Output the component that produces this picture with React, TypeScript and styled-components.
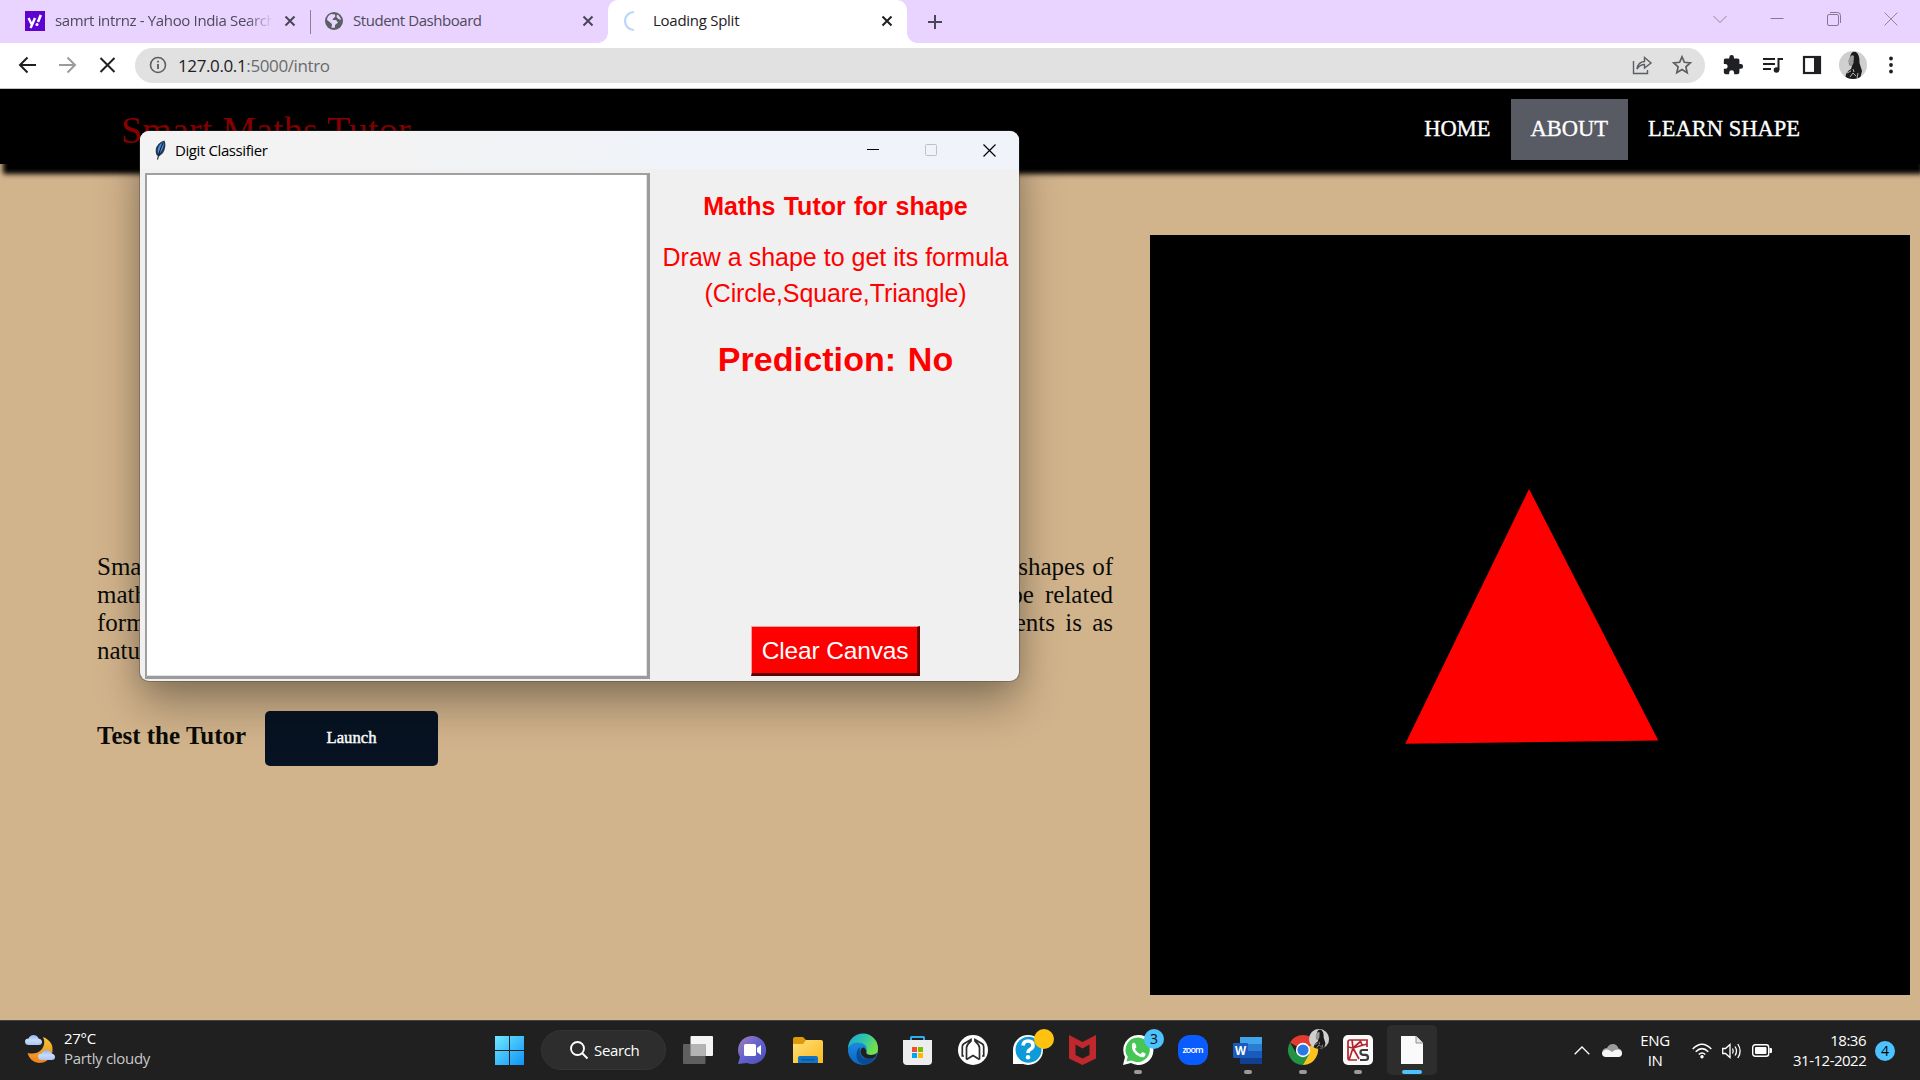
import React from "react";
import styled, { createGlobalStyle } from "styled-components";

const ui = `"Open Sans", "Noto Sans", sans-serif`;
const serif = `"Liberation Serif", "Times New Roman", serif`;
const arial = `"Liberation Sans", Arial, sans-serif`;

const Global = createGlobalStyle`
  * { box-sizing: border-box; }
  body { margin: 0; overflow: hidden; background: #d2b48c; }
  svg { display: block; flex: none; overflow: visible; }
  p, h1, h2 { margin: 0; }
  button { border: 0; padding: 0; background: none; }
`;

const Desktop = styled.div`
  position: relative;
  display: flex;
  flex-direction: column;
  width: 1920px;
  height: 1080px;
  overflow: hidden;
`;

/* ---------- Browser chrome ---------- */
const TabStrip = styled.div`
  display: flex;
  height: 43px;
  background: #e8d4ff;
`;
const Tab = styled.div<{ $w: number; $pad: number; $active?: boolean }>`
  position: relative;
  display: flex;
  align-items: center;
  width: ${(p) => p.$w}px;
  height: 43px;
  padding: 0 15px 1px ${(p) => p.$pad}px;
  color: ${(p) => (p.$active ? "#1f2024" : "#4f4a5b")};
  background: ${(p) => (p.$active ? "#fff" : "transparent")};
  border-radius: 10px 10px 0 0;
  ${(p) =>
    p.$active &&
    `&::before, &::after { content: ""; position: absolute; bottom: 0; width: 10px; height: 10px; }
     &::before { left: -10px; background: radial-gradient(circle at 0 0, transparent 9.5px, #fff 10px); }
     &::after { right: -10px; background: radial-gradient(circle at 100% 0, transparent 9.5px, #fff 10px); }`}
`;
const TabTitle = styled.span<{ $fade?: boolean; $ls?: number }>`
  flex: 1;
  margin-left: 10px;
  padding-bottom: 2px;
  overflow: hidden;
  white-space: nowrap;
  font: 15px/22px ${ui};
  letter-spacing: ${(p) => p.$ls ?? -0.35}px;
  ${(p) => p.$fade && "margin-right: 12px; mask-image: linear-gradient(90deg, #000 88%, transparent);"}
`;
const TabDivider = styled.i`
  width: 1px;
  height: 24px;
  margin-top: 10px;
  background: #8c8299;
`;
const NewTab = styled.div`
  display: flex;
  align-items: center;
  margin-left: 20px;
  flex: 1;
`;
const Controls = styled.div`
  display: flex;
  align-items: center;
  gap: 43px;
  height: 38px;
  padding-right: 22px;
`;
const Toolbar = styled.div`
  display: flex;
  align-items: center;
  height: 46px;
  padding: 0 20px 1px 18px;
  background: #fff;
  border-bottom: 1px solid #c4c4c4;
`;
const NavButtons = styled.div`
  display: flex;
  align-items: center;
  gap: 21px;
  width: 117px;
`;
const Omnibox = styled.div`
  display: flex;
  align-items: center;
  width: 1570px;
  height: 35px;
  padding: 0 13px 0 14px;
  border-radius: 18px;
  background: #e1e1e1;
`;
const Address = styled.span`
  flex: 1;
  margin-left: 11px;
  padding-top: 1px;
  color: #696b6e;
  font: 17px/24px ${ui};
  letter-spacing: -0.38px;
  b { font-weight: 400; color: #1f2024; }
`;
const OmniIcons = styled.div`
  display: flex;
  align-items: center;
  gap: 20px;
`;
const ToolIcons = styled.div`
  display: flex;
  align-items: center;
  flex: 1;
  padding-left: 17px;
  gap: 19px;
`;

/* ---------- Web page ---------- */
const Page = styled.main`
  display: flex;
  flex-direction: column;
  height: 931px;
  background: #d2b48c;
  overflow: hidden;
`;
const SiteHeader = styled.header`
  display: flex;
  justify-content: space-between;
  height: 75px;
  padding: 10px 100px 0 121px;
  background: #000;
  box-shadow: 3px 10px 5px #000;
`;
const Brand = styled.h1`
  padding-top: 9px;
  color: #8b0000;
  font: 38px/44px ${serif};
  letter-spacing: 0.15px;
`;
const SiteNav = styled.nav`
  display: flex;
`;
const NavItem = styled.a<{ $active?: boolean }>`
  height: 61px;
  padding: 0 20px;
  color: #fff;
  background: ${(p) => (p.$active ? "#585a64" : "transparent")};
  font: 22.5px/59px ${serif};
  -webkit-text-stroke: 0.35px #fff;
`;
const Split = styled.div`
  display: flex;
  flex: 1;
  justify-content: space-between;
  padding: 71px 10px 25px 97px;
`;
const Intro = styled.section`
  width: 1016px;
  padding-top: 318px;
`;
const IntroLine = styled.p<{ $space: number }>`
  display: flex;
  justify-content: space-between;
  color: #0b0b08;
  font: 25px/28px ${serif};
  word-spacing: ${(p) => p.$space}px;
`;
const LaunchRow = styled.div`
  display: flex;
  align-items: center;
  gap: 18px;
  margin-top: 46px;
`;
const LaunchLabel = styled.h2`
  width: 150px;
  padding-bottom: 6px;
  white-space: nowrap;
  color: #0b0b08;
  font: bold 25px/28px ${serif};
`;
const LaunchButton = styled.button`
  width: 173px;
  height: 55px;
  padding-bottom: 2px;
  border-radius: 5px;
  color: #fff;
  background: #071322;
  font: 16.67px/19px ${serif};
  -webkit-text-stroke: 0.45px #fff;
`;
const ShapePane = styled.section`
  width: 760px;
  height: 760px;
  background: #000;
`;

/* ---------- Floating app window ---------- */
const Window = styled.div`
  position: absolute;
  left: 140px;
  top: 131px;
  display: flex;
  flex-direction: column;
  width: 879px;
  height: 550px;
  border-radius: 9px;
  background: #f0f0f0;
  box-shadow: 0 0 0 1px rgba(60, 60, 60, 0.35), 0 24px 46px rgba(0, 0, 0, 0.32), 0 3px 24px rgba(0, 0, 0, 0.12);
  overflow: hidden;
`;
const TitleBar = styled.div`
  display: flex;
  align-items: center;
  height: 38px;
  padding: 0 23px 0 14px;
  background: linear-gradient(90deg, #f3f3f3 25%, #f0f3f9 60%);
`;
const WindowTitle = styled.span`
  flex: 1;
  margin-left: 8px;
  padding-bottom: 1px;
  color: #000;
  font: 15px/20px ${ui};
  letter-spacing: -0.4px;
`;
const WindowControls = styled.div`
  display: flex;
  align-items: center;
  gap: 46px;
`;
const WindowBody = styled.div`
  display: flex;
  flex: 1;
  padding: 4px 0 2px 5px;
`;
const DrawCanvas = styled.div`
  width: 505px;
  height: 506px;
  border: solid;
  border-width: 2px 3px 3px 2px;
  border-color: #a0a0a0 #9b9b9b #9b9b9b #a0a0a0;
  background: #fff;
  box-shadow: inset -1px -1px 0 #e3e3e3;
`;
const Panel = styled.div`
  display: flex;
  flex: 1;
  flex-direction: column;
  align-items: center;
  padding-left: 2px;
  color: #f00;
`;
const PanelText = styled.p<{ $top: number; $size?: number; $bold?: boolean; $ls?: number; $ws?: number }>`
  margin-top: ${(p) => p.$top}px;
  white-space: nowrap;
  font: ${(p) => (p.$bold ? "bold" : "normal")} ${(p) => p.$size ?? 25}px/36px ${arial};
  letter-spacing: ${(p) => p.$ls ?? 0}px;
  word-spacing: ${(p) => p.$ws ?? 0}px;
`;
const ClearButton = styled.button`
  width: 169px;
  height: 50px;
  padding: 2px 0 0 1px;
  margin-top: auto;
  margin-bottom: 3px;
  border: solid;
  border-width: 1px 3px 3px 1px;
  border-color: #ff9c9c #5c0000 #5c0000 #ff9c9c;
  color: #fff;
  background: #f00;
  font: 24.5px/28px ${arial};
  letter-spacing: -0.15px;
  white-space: nowrap;
`;

/* ---------- Taskbar ---------- */
const Taskbar = styled.footer`
  display: flex;
  height: 60px;
  background: #202020;
  border-top: 1px solid #444;
  color: #fff;
  font: 15px/20px ${ui};
`;
const Weather = styled.div`
  display: flex;
  align-items: center;
  width: 482px;
  padding: 0 0 3px 25px;
  gap: 8px;
`;
const Stack = styled.div<{ $align?: string; $w?: number; $ls?: number }>`
  display: flex;
  flex-direction: column;
  width: ${(p) => (p.$w ? `${p.$w}px` : "auto")};
  text-align: ${(p) => p.$align ?? "left"};
  letter-spacing: ${(p) => p.$ls ?? 0}px;
  white-space: nowrap;
  padding-bottom: 2px;
  small { font-size: 15px; color: #c9c9c9; }
`;
const TaskCell = styled.div<{ $open?: boolean; $focus?: boolean }>`
  position: relative;
  display: flex;
  align-items: center;
  justify-content: center;
  width: ${(p) => (p.$focus ? 50 : 55)}px;
  margin: ${(p) => (p.$focus ? "4px 3px 5px 2px" : "0 0 1px")};
  border-radius: 5px;
  background: ${(p) => (p.$focus ? "#2d2d2d" : "transparent")};
  ${(p) =>
    (p.$open || p.$focus) &&
    `&::after { content: ""; position: absolute; bottom: ${p.$focus ? 1 : 5}px; height: 4px; border-radius: 2px;
      width: ${p.$focus ? 20 : 8}px; background: ${p.$focus ? "#4cc2ff" : "#9a9a9a"}; }`}
`;
const SearchPill = styled.div`
  display: flex;
  align-items: center;
  width: 125px;
  height: 40px;
  margin: 9px 4px 0 4px;
  padding-left: 28px;
  gap: 6px;
  border-radius: 20px;
  border: 1px solid #343434;
  background: #2d2d2d;
  letter-spacing: -0.35px;
`;
const TaskBadge = styled.span<{ $bg: string }>`
  position: absolute;
  top: 8px;
  right: 1px;
  width: 20px;
  height: 20px;
  border-radius: 50%;
  background: ${(p) => p.$bg};
  color: #111;
  font: 14px/20px ${ui};
  text-align: center;
`;
const Tray = styled.div`
  display: flex;
  align-items: center;
  flex: 1;
  justify-content: flex-end;
  padding-right: 25px;
`;
const TraySlot = styled.div<{ $gap: number }>`
  margin-right: ${(p) => p.$gap}px;
`;
const Count = styled.span`
  width: 20px;
  height: 20px;
  border-radius: 50%;
  background: #4cc2ff;
  color: #000;
  font: 14px/20px ${ui};
  text-align: center;
`;

const Cross = ({ s = 10, c, w = 2 }: { s?: number; c: string; w?: number }) => (
  <svg width={s} height={s}>
    <path d={`M.5 .5L${s - 0.5} ${s - 0.5}M${s - 0.5} .5L.5 ${s - 0.5}`} stroke={c} strokeWidth={w} />
  </svg>
);

const Portrait = ({ size }: { size: number }) => (
  <svg width={size} height={size} viewBox="0 0 28 28">
    <defs><clipPath id={`por${size}`}><circle cx="14" cy="14" r="14" /></clipPath></defs>
    <g clipPath={`url(#por${size})`}>
      <rect width="28" height="28" fill="#cfcfcf" />
      <path d="M11 6Q12 0 17 1Q21 4 20.500 12L23 20L21 28H6Q7 20 12 18L13 15Q9 14 10 11Z" fill="#1b1b1b" />
      <path d="M10.500 7Q12 3 15 5L14.500 12L13 15H10.500L10 11.500L9 10.500Z" fill="#9a9a9a" />
      <path d="M8 22L12 20M11 26L14 22L17 25M18 27L19 22M14 18L15 21" fill="none" stroke="#b5b5b5" strokeWidth="1" />
    </g>
  </svg>
);

function BrowserChrome() {
  return (
    <>
      <TabStrip>
        <Tab $w={310} $pad={25}>
          <svg width="20" height="20">
            <rect width="20" height="20" fill="#5f01d1" />
            <path d="M3.500 7L6.500 13M10 7L5.600 17" stroke="#fff" strokeWidth="2.4" />
            <path d="M15.800 4L13 11" stroke="#fff" strokeWidth="2.6" />
            <circle cx="12" cy="13.600" r="1.500" fill="#fff" />
          </svg>
          <TabTitle $fade>samrt intrnz - Yahoo India Search</TabTitle>
          <Cross c="#4b4656" />
        </Tab>
        <TabDivider />
        <Tab $w={297} $pad={14}>
          <svg width="18" height="18">
            <circle cx="9" cy="9" r="9" fill="#5b5e62" />
            <path d="M2 8Q2 4 6 2L10 2.500Q11 5 8.500 6L7.500 8H11L13 10.500L10 13V15.500Q8 16 6.500 15.500L7 12L4 9.500Z" fill="#e8d4ff" />
            <path d="M12 2.500Q15.500 4.500 16 8L13.500 7L11.500 5Z" fill="#e8d4ff" />
          </svg>
          <TabTitle $ls={-0.45}>Student Dashboard</TabTitle>
          <Cross c="#4b4656" />
        </Tab>
        <Tab $w={299} $pad={15} $active>
          <svg width="20" height="20"><path d="M11 1A9 9 0 0 0 11 19" fill="none" stroke="#bcd6fb" strokeWidth="2.2" /></svg>
          <TabTitle $ls={-0.27}>Loading Split</TabTitle>
          <Cross c="#1f2024" />
        </Tab>
        <NewTab>
          <svg width="16" height="16"><path d="M8 1V15M1 8H15" stroke="#4b4656" strokeWidth="2" /></svg>
        </NewTab>
        <Controls>
          <svg width="14" height="14"><path d="M.5 4L7 10.500L13.500 4" fill="none" stroke="#918799" /></svg>
          <svg width="14" height="14"><path d="M.5 6.500H13.500" stroke="#85798f" /></svg>
          <svg width="14" height="14" fill="none" stroke="#85798f">
            <rect x=".5" y="2.500" width="11" height="11" rx="1.500" />
            <path d="M3 .5H10.500Q13.500 .5 13.500 3.500V11" />
          </svg>
          <Cross s={14} c="#918799" w={1} />
        </Controls>
      </TabStrip>
      <Toolbar>
        <NavButtons>
          <svg width="19" height="18" fill="none" stroke="#1f2024" strokeWidth="2"><path d="M18 9H2M9.500 1.500L2 9L9.500 16.500" /></svg>
          <svg width="19" height="18" fill="none" stroke="#9b9b9b" strokeWidth="2"><path d="M1 9H17M9.500 1.500L17 9L9.500 16.500" /></svg>
          <svg width="19" height="18" fill="none" stroke="#1f2024" strokeWidth="2"><path d="M2.500 2L16.500 16M16.500 2L2.500 16" /></svg>
        </NavButtons>
        <Omnibox>
          <svg width="18" height="18" fill="none" stroke="#5b5e62">
            <circle cx="9" cy="9" r="7.500" strokeWidth="1.600" />
            <path d="M9 8V13M9 4.800V6.600" strokeWidth="1.800" />
          </svg>
          <Address><b>127.0.0.1</b>:5000/intro</Address>
          <OmniIcons>
            <svg width="20" height="20" fill="none" stroke="#5b5e62" strokeWidth="1.400">
              <path d="M1.500 6V18.500H15.500V15M5 14Q6 7 12.500 6.500V2.500L19 8L12.500 13V9.500Q8 9.500 5 14Z" />
            </svg>
            <svg width="20" height="20" viewBox="0 0 20 20"><path d="M10 1.800L12.400 7.300L18.300 7.900L13.900 11.900L15.200 17.700L10 14.600L4.800 17.700L6.100 11.900L1.700 7.900L7.600 7.300Z" fill="none" stroke="#5b5e62" strokeWidth="1.700" /></svg>
          </OmniIcons>
        </Omnibox>
        <ToolIcons>
          <svg width="22" height="22" viewBox="0 0 24 24" fill="#1f2024"><path d="M20.500 11H19V7c0-1.100-.9-2-2-2h-4V3.500a2.500 2.500 0 0 0-5 0V5H4c-1.100 0-2 .9-2 2v3.800h1.500a2.700 2.700 0 0 1 0 5.400H2V20c0 1.100.9 2 2 2h3.800v-1.500a2.700 2.700 0 0 1 5.400 0V22H17c1.100 0 2-.9 2-2v-4h1.500a2.500 2.500 0 0 0 0-5z" /></svg>
          <svg width="20" height="18" fill="none" stroke="#1f2024" strokeWidth="2">
            <path d="M0 3H12M0 8H12M0 13H8M15.500 14V3H20" />
            <circle cx="13.500" cy="14" r="2.800" fill="#1f2024" stroke="none" />
          </svg>
          <svg width="18" height="18"><rect x="2" y="1" width="16" height="16" fill="#fff" stroke="#1f2024" strokeWidth="2.200" /><rect x="12" y="1" width="6" height="16" fill="#1f2024" /></svg>
          <Portrait size={28} />
          <svg width="10" height="18" fill="#1f2024"><circle cx="5" cy="2.500" r="1.900" /><circle cx="5" cy="9" r="1.900" /><circle cx="5" cy="15.500" r="1.900" /></svg>
        </ToolIcons>
      </Toolbar>
    </>
  );
}

function WebPage() {
  return (
    <Page>
      <SiteHeader>
        <Brand>Smart Maths Tutor</Brand>
        <SiteNav>
          <NavItem>HOME</NavItem>
          <NavItem $active>ABOUT</NavItem>
          <NavItem>LEARN SHAPE</NavItem>
        </SiteNav>
      </SiteHeader>
      <Split>
        <Intro>
          <IntroLine $space={1}><span>Smart</span><span>shapes of</span></IntroLine>
          <IntroLine $space={5}><span>maths</span><span>shape related</span></IntroLine>
          <IntroLine $space={4}><span>formulas</span><span>students is as</span></IntroLine>
          <IntroLine $space={0}><span>natural</span></IntroLine>
          <LaunchRow>
            <LaunchLabel>Test the Tutor</LaunchLabel>
            <LaunchButton>Launch</LaunchButton>
          </LaunchRow>
        </Intro>
        <ShapePane>
          <svg width="760" height="760"><path d="M379 254L508.300 505.500L255.300 508.800Z" fill="#f00" /></svg>
        </ShapePane>
      </Split>
    </Page>
  );
}

function ClassifierWindow() {
  return (
    <Window>
      <TitleBar>
        <svg width="13" height="20">
          <path d="M10.500 .5Q13 6 9 13L5 16.500L2.500 15Q0 9 4.500 4Q7 1 10.500 .5Z" fill="#20364f" />
          <path d="M9.500 2Q10.500 7 6.500 12.500L4 13.500Q3 8 6 4.500Z" fill="#4b8fdd" />
          <path d="M9 3Q6 9 3.500 19.500" fill="none" stroke="#16202c" strokeWidth="1.100" />
        </svg>
        <WindowTitle>Digit Classifier</WindowTitle>
        <WindowControls>
          <svg width="12" height="12"><path d="M0 5.500H12" stroke="#000" /></svg>
          <svg width="12" height="12"><rect x=".5" y=".5" width="11" height="11" rx="1" fill="none" stroke="#bfc1c6" /></svg>
          <Cross s={13} c="#000" w={1.2} />
        </WindowControls>
      </TitleBar>
      <WindowBody>
        <DrawCanvas />
        <Panel>
          <PanelText $top={15} $bold $ws={1.3}>Maths Tutor for shape</PanelText>
          <PanelText $top={15}>Draw a shape to get its formula</PanelText>
          <PanelText $top={0} $ls={-0.1}>(Circle,Square,Triangle)</PanelText>
          <PanelText $top={30} $size={34} $bold $ls={0.1} $ws={2}>Prediction: No</PanelText>
          <ClearButton>Clear Canvas</ClearButton>
        </Panel>
      </WindowBody>
    </Window>
  );
}

const cloud = "M4 10Q0 10 0 6.500Q0 3.500 3.500 3.500Q5 0 8.500 0Q12.500 0 13.500 3.500Q17 4 17 7Q17 10 13.500 10Z";

function SystemTaskbar() {
  return (
    <Taskbar>
      <Weather>
        <svg width="31" height="30">
          <defs>
            <linearGradient id="moon" x2="0" y2="1"><stop stopColor="#f3c936" /><stop offset="1" stopColor="#ef7f1a" /></linearGradient>
            <linearGradient id="cl" x2="0" y2="1"><stop stopColor="#8fb4f2" /><stop offset=".5" stopColor="#c9dcfa" /><stop offset="1" stopColor="#aac6f5" /></linearGradient>
          </defs>
          <path d="M18 3Q30 8 27 20Q23 29 14 29Q5 28 2.500 19Q12 21 17 15Q21 9 18 3Z" fill="url(#moon)" />
          <path d={cloud} transform="translate(0 1)" fill="url(#cl)" />
          <path d={cloud} transform="translate(13 16)" fill="url(#cl)" />
        </svg>
        <Stack $ls={-0.3}><span>27°C</span><small>Partly cloudy</small></Stack>
      </Weather>

      <TaskCell>
        <svg width="29" height="29">
          <defs><linearGradient id="win" x2="1" y2="1"><stop stopColor="#6fe9ff" /><stop offset="1" stopColor="#0d93f5" /></linearGradient></defs>
          <path d="M0 0H14V14H0ZM15 0H29V14H15ZM0 15H14V29H0ZM15 15H29V29H15Z" fill="url(#win)" />
        </svg>
      </TaskCell>
      <SearchPill>
        <svg width="18" height="18" fill="none" stroke="#fff" strokeWidth="1.900"><circle cx="7.500" cy="7.500" r="6.500" /><path d="M12 12L17.500 17.500" /></svg>
        Search
      </SearchPill>
      <TaskCell>
        <svg width="30" height="28">
          <rect x="7.500" width="22.500" height="20" rx="1" fill="#f4f4f4" />
          <rect y="8" width="22.500" height="20" rx="1" fill="#5f5f5f" />
          <rect x="7.500" y="8" width="15" height="12" fill="#b4b4b4" />
        </svg>
      </TaskCell>
      <TaskCell>
        <svg width="29" height="29">
          <defs><linearGradient id="chat" x2="1" y2="1"><stop stopColor="#a77fb8" /><stop offset=".5" stopColor="#6261cf" /><stop offset="1" stopColor="#4b4fb5" /></linearGradient></defs>
          <path d="M15 0A14 14 0 1 1 9 27L0 28L2 21A14 14 0 0 1 15 0Z" fill="url(#chat)" />
          <rect x="6" y="8" width="12" height="12" rx="1.500" fill="#fff" /><path d="M19 12L23 9V19L19 16Z" fill="#fff" />
        </svg>
      </TaskCell>
      <TaskCell>
        <svg width="30" height="27">
          <defs><linearGradient id="fold" x2="1" y2="1"><stop stopColor="#ffe07a" /><stop offset="1" stopColor="#fdb81e" /></linearGradient></defs>
          <path d="M0 2Q0 0 2 0H10L13 3H28V12H0Z" fill="#dd9a09" />
          <path d="M0 7H10L13 3H28Q30 3 30 5V26H0Z" fill="url(#fold)" />
          <path d="M5 26V21Q5 19 7 19H23Q25 19 25 21V26Z" fill="#0f74c5" /><path d="M8.500 22.800H21.500" stroke="#0a4b87" />
        </svg>
      </TaskCell>
      <TaskCell>
        <svg width="30" height="30">
          <defs>
            <linearGradient id="eg" x2="1" y2=".5"><stop stopColor="#1ea4dc" /><stop offset=".55" stopColor="#2fc7a5" /><stop offset="1" stopColor="#76e04b" /></linearGradient>
            <linearGradient id="eb" x2="0" y2="1"><stop stopColor="#2198e6" /><stop offset="1" stopColor="#0b63c1" /></linearGradient>
          </defs>
          <circle cx="15" cy="15" r="15" fill="url(#eb)" />
          <path d="M0 13A15 15 0 0 1 30 14Q30 20 23 20Q17 20 18.500 16Q20 10 13 8Q5 6 0 13Z" fill="url(#eg)" />
          <path d="M12 12Q10 23 19 24Q24 24 27 22Q24 29 16 30Q8 27 8.500 19Q9 14 12 12Z" fill="#0c4a94" />
          <path d="M18.500 16Q17 20 23 20Q27 20 29 18L27.500 22Q22 25 17 23Q11 20 13 14Q16 10 18.500 16Z" fill="#202020" />
        </svg>
      </TaskCell>
      <TaskCell>
        <svg width="29" height="29">
          <path d="M8 5V1.500Q8 1 8.500 1H20.500Q21 1 21 1.500V5" fill="none" stroke="#2ab0ee" strokeWidth="2" />
          <path d="M0 4H29V25Q29 29 25 29H4Q0 29 0 25Z" fill="#ededed" />
          <path d="M9 11H14V16H9Z" fill="#f25022" /><path d="M15 11H20V16H15Z" fill="#7fba00" />
          <path d="M9 17H14V22H9Z" fill="#00a4ef" /><path d="M15 17H20V22H15Z" fill="#ffb900" />
        </svg>
      </TaskCell>
      <TaskCell>
        <svg width="30" height="30" fill="none" stroke="#2b2b2b" strokeWidth="1.700">
          <circle cx="15" cy="15" r="15" fill="#fff" stroke="none" />
          <path d="M8.500 24.500V12.500Q9 9.500 13 6V4.500L5.500 9Q4.300 10 4.300 12V21H6" />
          <path d="M21.500 24.500V12.500Q21 9.500 17 6V4.500L24.500 9Q25.700 10 25.700 12V21H24" />
          <path d="M8.500 24.500L15 20.500L21.500 24.500" />
        </svg>
      </TaskCell>
      <TaskCell>
        <svg width="30" height="30">
          <circle cx="15" cy="15" r="15" fill="#fff" /><path d="M0 15V29L10 29Z" fill="#fff" />
          <circle cx="15.500" cy="14.800" r="13" fill="#0c9bd8" />
          <path d="M10 10.500Q10.500 6 15 6Q20 6 20 10.500Q20 13 17 14.500Q15 15.600 15 18" fill="none" stroke="#fff" strokeWidth="3.600" />
          <circle cx="15" cy="22.300" r="2.200" fill="#fff" />
        </svg>
        <TaskBadge $bg="#ffc20e" />
      </TaskCell>
      <TaskCell>
        <svg width="27" height="30">
          <path d="M0 0L13.500 7L27 0V23.500L13.500 30L0 23.500Z" fill="#c0282d" />
          <path d="M6.500 9.500L13.500 13.500L20.500 9.500V20L13.500 23.500L6.500 20Z" fill="#202020" />
        </svg>
      </TaskCell>
      <TaskCell $open>
        <svg width="30" height="30">
          <path d="M15 0A15 15 0 1 1 8 28L0 30L2 22A15 15 0 0 1 15 0Z" fill="#fff" />
          <path d="M15.300 2.500A12.300 12.300 0 1 1 8.500 25.500L3.500 26.500L4.800 21.800A12.300 12.300 0 0 1 15.300 2.500Z" fill="#45c655" />
          <path d="M9 9Q11 6.500 12.500 9L13.500 12L12 14Q14 18 17.500 19L19.500 17L22.500 18.500Q23 20.500 21 22Q18 23 13 19.500Q8 15 9 9Z" fill="#fff" />
        </svg>
        <TaskBadge $bg="#4cc2ff">3</TaskBadge>
      </TaskCell>
      <TaskCell>
        <svg width="30" height="30">
          <rect width="30" height="30" rx="12" fill="#0b5cff" />
          <text x="15" y="17.500" textAnchor="middle" fontFamily="Open Sans, sans-serif" fontWeight="600" fontSize="9" textLength="21" fill="#fff">zoom</text>
        </svg>
      </TaskCell>
      <TaskCell $open>
        <svg width="29" height="27">
          <path d="M7 0H29V7H7Z" fill="#41a5ee" /><path d="M7 7H29V14H7Z" fill="#2b7cd3" />
          <path d="M7 14H29V21H7Z" fill="#185abd" /><path d="M7 21H29V27H7Z" fill="#103f91" />
          <rect y="6" width="15" height="15" rx="1" fill="#185abd" />
          <text x="7.500" y="17.500" textAnchor="middle" fontFamily="Open Sans, sans-serif" fontWeight="700" fontSize="11.500" fill="#fff">W</text>
        </svg>
      </TaskCell>
      <TaskCell $open>
        <svg width="30" height="30">
          <path d="M15 15L2 7.500A15 15 0 0 1 28 7.500Z" fill="#e33b2e" />
          <path d="M15 15L28 7.500A15 15 0 0 1 15 30L15 22Z" fill="#fcc31e" />
          <path d="M2 7.500A15 15 0 0 0 15 30L21.500 18.700L15 15L8.500 18.700Z" fill="#229342" />
          <path d="M15 8H28.300L28 7.500H15Z" fill="#e33b2e" />
          <circle cx="15" cy="15" r="7.200" fill="#fff" /><circle cx="15" cy="15" r="5.600" fill="#2a78e4" />
        </svg>
        <TaskBadge $bg="#888"><Portrait size={20} /></TaskBadge>
      </TaskCell>
      <TaskCell $open>
        <svg width="30" height="30">
          <rect width="30" height="30" rx="5" fill="#fafafa" />
          <path d="M5 7Q5 5 7 5H24V12M5 7V23Q5 25 7 25H14M9 5L10 13L6 25M10 13L18 6M10 13L16 24M5 12L10 13L24 9M17 5L19 10" fill="none" stroke="#b3242b" strokeWidth="1.700" />
          <path d="M25 15H19.500Q17.500 15 17.500 17.200Q17.500 19.500 20 19.800H22.500Q25 20 25 22.500Q25 25 22.500 25H17" fill="none" stroke="#3b3b3b" strokeWidth="2.200" />
        </svg>
      </TaskCell>
      <TaskCell $focus>
        <svg width="22" height="28">
          <path d="M0 0H15L22 7V28H0Z" fill="#fafafa" /><path d="M15 0V7H22" fill="#e6e6e6" stroke="#777" strokeWidth=".8" />
        </svg>
      </TaskCell>

      <Tray>
        <TraySlot $gap={12}><svg width="16" height="9"><path d="M.7 8.300L8 1L15.300 8.300" fill="none" stroke="#fff" strokeWidth="1.300" /></svg></TraySlot>
        <TraySlot $gap={18}>
          <svg width="20" height="13">
            <path d="M5 12Q0 12 0 8Q1 4 5 4Q7 0 11 0Q15 0 16.500 4.500Q20 5 20 9Q20 12 17 13Z" fill="#9b9b9b" />
            <path d="M4 13Q0 13 0 9Q1 6 4 5.500Q7 5 10 8L13 6Q19 4 20 9Q20 13 16 13Z" fill="#f7f7f7" />
          </svg>
        </TraySlot>
        <TraySlot $gap={22}><Stack $align="center" $w={30} $ls={-0.4}><span>ENG</span><span>IN</span></Stack></TraySlot>
        <TraySlot $gap={10}>
          <svg width="20" height="16" fill="none" stroke="#fff" strokeWidth="1.500">
            <path d="M.7 6Q10 -3.500 19.300 6M3.700 8.800Q10 2.500 16.300 8.800M6.700 11.500Q10 8.500 13.300 11.500" /><circle cx="10" cy="13.800" r="1.700" fill="#fff" stroke="none" />
          </svg>
        </TraySlot>
        <TraySlot $gap={10}>
          <svg width="20" height="16" fill="none" stroke="#fff" strokeWidth="1.300">
            <path d="M.7 5.500H3.500L8 1.500V14.500L3.500 10.500H.7ZM10.500 5.500Q12 8 10.500 10.500M13 3.500Q16 8 13 12.500M15.800 1Q20.500 8 15.800 15" />
          </svg>
        </TraySlot>
        <TraySlot $gap={21}>
          <svg width="20" height="13"><rect x=".7" y=".7" width="16" height="11.600" rx="2.500" fill="none" stroke="#fff" strokeWidth="1.400" /><rect x="3" y="3" width="11.500" height="7" rx="1" fill="#fff" /><path d="M17.500 4H19Q20 4 20 5V8Q20 9 19 9H17.500Z" fill="#fff" /></svg>
        </TraySlot>
        <TraySlot $gap={9}><Stack $align="right" $w={73} $ls={-0.5}><span>18:36</span><span>31-12-2022</span></Stack></TraySlot>
        <Count>4</Count>
      </Tray>
    </Taskbar>
  );
}

export default function App() {
  return (
    <Desktop>
      <Global />
      <BrowserChrome />
      <WebPage />
      <SystemTaskbar />
      <ClassifierWindow />
    </Desktop>
  );
}
